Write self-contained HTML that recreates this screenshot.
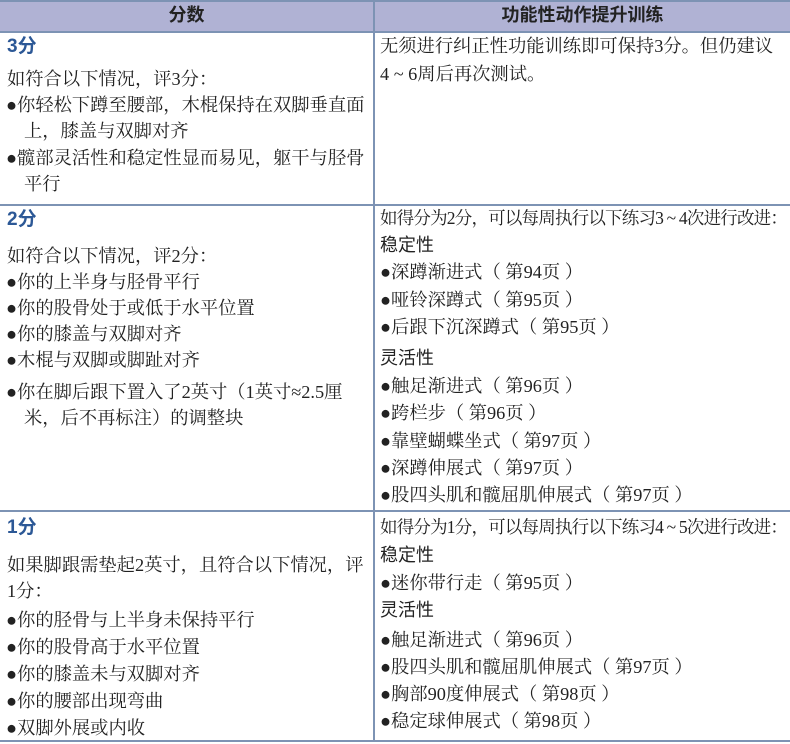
<!DOCTYPE html>
<html><head><meta charset="utf-8"><style>
body{margin:0;width:790px;height:744px;background:#fff;position:relative;overflow:hidden;font-family:"Liberation Serif","Noto Serif CJK SC",serif;color:#222;}
.t{position:absolute;font-size:18.3px;line-height:24px;white-space:nowrap;}
.h{font-family:"Liberation Sans","Noto Sans CJK SC",sans-serif;font-weight:bold;color:#2c5896;font-size:19px;}
.s{font-family:"Liberation Sans","Noto Sans CJK SC",sans-serif;font-size:18px;}
.hd{position:absolute;top:0;height:31px;background:#b0b2d4;font-family:"Liberation Sans","Noto Sans CJK SC",sans-serif;font-weight:bold;font-size:18px;line-height:31px;text-align:center;color:#222;}
.ln{position:absolute;background:#7d93b4;}
.n{font-size:17.5px;letter-spacing:-0.8px;}
</style></head><body>
<div class="hd" style="left:0;width:373px">分数</div>
<div class="hd" style="left:375px;width:415px">功能性动作提升训练</div>
<div class="ln" style="left:0;top:0;width:790px;height:2px"></div>
<div class="ln" style="left:0;top:31px;width:790px;height:2px"></div>
<div class="ln" style="left:0;top:204px;width:790px;height:2px"></div>
<div class="ln" style="left:0;top:510px;width:790px;height:2px"></div>
<div class="ln" style="left:0;top:740px;width:790px;height:2px"></div>
<div class="ln" style="left:373px;top:0;width:2px;height:742px"></div>

<div class="t h" style="left:7px;top:35px">3分</div>
<div class="t" style="left:7px;top:67px">如符合以下情况，评3分：</div>
<div class="t" style="left:6px;top:93px">●你轻松下蹲至腰部，木棍保持在双脚垂直面</div>
<div class="t" style="left:24px;top:119px">上，膝盖与双脚对齐</div>
<div class="t" style="left:6px;top:146px">●髋部灵活性和稳定性显而易见，躯干与胫骨</div>
<div class="t" style="left:24px;top:172px">平行</div>

<div class="t" style="left:380px;top:34px">无须进行纠正性功能训练即可保持3分。但仍建议</div>
<div class="t" style="left:380px;top:62px">4 ~ 6周后再次测试。</div>

<div class="t h" style="left:7px;top:208px">2分</div>
<div class="t" style="left:7px;top:244px">如符合以下情况，评2分：</div>
<div class="t" style="left:6px;top:270px">●你的上半身与胫骨平行</div>
<div class="t" style="left:6px;top:296px">●你的股骨处于或低于水平位置</div>
<div class="t" style="left:6px;top:322px">●你的膝盖与双脚对齐</div>
<div class="t" style="left:6px;top:348px">●木棍与双脚或脚趾对齐</div>
<div class="t" style="left:6px;top:380px">●你在脚后跟下置入了2英寸（1英寸≈2.5厘</div>
<div class="t" style="left:24px;top:406px">米，后不再标注）的调整块</div>

<div class="t n" style="left:380px;top:206px">如得分为2分，可以每周执行以下练习3 ~ 4次进行改进：</div>
<div class="t s" style="left:380px;top:233px">稳定性</div>
<div class="t" style="left:380px;top:260px">●深蹲渐进式（ 第94页 ）</div>
<div class="t" style="left:380px;top:288px">●哑铃深蹲式（ 第95页 ）</div>
<div class="t" style="left:380px;top:315px">●后跟下沉深蹲式（ 第95页 ）</div>
<div class="t s" style="left:380px;top:346px">灵活性</div>
<div class="t" style="left:380px;top:374px">●触足渐进式（ 第96页 ）</div>
<div class="t" style="left:380px;top:401px">●跨栏步（ 第96页 ）</div>
<div class="t" style="left:380px;top:429px">●靠壁蝴蝶坐式（ 第97页 ）</div>
<div class="t" style="left:380px;top:456px">●深蹲伸展式（ 第97页 ）</div>
<div class="t" style="left:380px;top:483px">●股四头肌和髋屈肌伸展式（ 第97页 ）</div>

<div class="t h" style="left:7px;top:516px">1分</div>
<div class="t" style="left:7px;top:553px">如果脚跟需垫起2英寸，且符合以下情况，评</div>
<div class="t" style="left:7px;top:579px">1分：</div>
<div class="t" style="left:6px;top:608px">●你的胫骨与上半身未保持平行</div>
<div class="t" style="left:6px;top:635px">●你的股骨高于水平位置</div>
<div class="t" style="left:6px;top:662px">●你的膝盖未与双脚对齐</div>
<div class="t" style="left:6px;top:689px">●你的腰部出现弯曲</div>
<div class="t" style="left:6px;top:716px">●双脚外展或内收</div>

<div class="t n" style="left:380px;top:515px">如得分为1分，可以每周执行以下练习4 ~ 5次进行改进：</div>
<div class="t s" style="left:380px;top:543px">稳定性</div>
<div class="t" style="left:380px;top:571px">●迷你带行走（ 第95页 ）</div>
<div class="t s" style="left:380px;top:598px">灵活性</div>
<div class="t" style="left:380px;top:628px">●触足渐进式（ 第96页 ）</div>
<div class="t" style="left:380px;top:655px">●股四头肌和髋屈肌伸展式（ 第97页 ）</div>
<div class="t" style="left:380px;top:682px">●胸部90度伸展式（ 第98页 ）</div>
<div class="t" style="left:380px;top:709px">●稳定球伸展式（ 第98页 ）</div>
</body></html>
